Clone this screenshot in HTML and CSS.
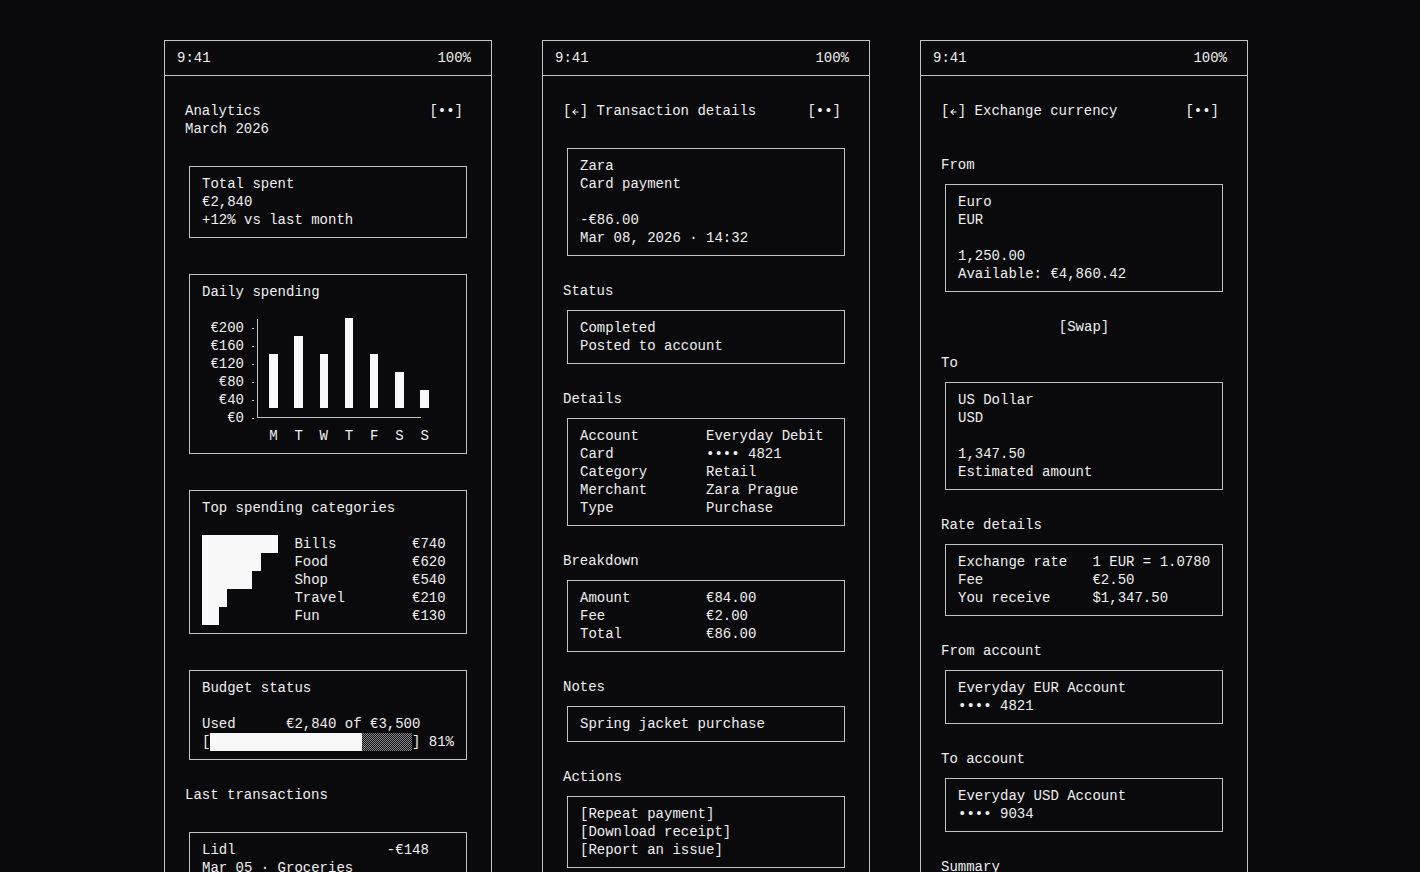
FILE: index.html
```html
<!DOCTYPE html>
<html lang="en">
<head>
<meta charset="utf-8">
<title>Wallet screens</title>
<link rel="stylesheet" href="styles.css">
</head>
<body>
<main class="screens">

  <!-- Analytics -->
  <section class="phone">
    <div class="status"><span>9:41</span><span>100%</span></div>
    <div class="screen">
      <header class="topbar">
        <div>Analytics<br>March 2026</div>
        <span>[••]</span>
      </header>

      <div class="card">
        <div>Total spent</div>
        <div>€2,840</div>
        <div>+12% vs last month</div>
      </div>

      <div class="card">
        <div>Daily spending</div>
        <div class="chart">
          <ul class="y-axis">
            <li>€200</li>
            <li>€160</li>
            <li>€120</li>
            <li>€80</li>
            <li>€40</li>
            <li>€0</li>
          </ul>
          <div class="plot">
            <span class="bar" style="height:54px"></span>
            <span class="bar" style="height:72px"></span>
            <span class="bar" style="height:54px"></span>
            <span class="bar" style="height:90px"></span>
            <span class="bar" style="height:54px"></span>
            <span class="bar" style="height:36px"></span>
            <span class="bar" style="height:18px"></span>
          </div>
          <div class="days">M  T  W  T  F  S  S</div>
        </div>
      </div>

      <div class="card">
        <div>Top spending categories</div>
        <div class="cats">
          <span class="block" style="width:9ch"></span><span>Bills</span><span>€740</span>
          <span class="block" style="width:7ch"></span><span>Food</span><span>€620</span>
          <span class="block" style="width:6ch"></span><span>Shop</span><span>€540</span>
          <span class="block" style="width:3ch"></span><span>Travel</span><span>€210</span>
          <span class="block" style="width:2ch"></span><span>Fun</span><span>€130</span>
        </div>
      </div>

      <div class="card">
        <div>Budget status</div>
        <div class="budget">
          <div class="kv kv-10"><span>Used</span><span>€2,840 of €3,500</span></div>
          <div class="progress">
            <span>[</span>
            <span class="meter"><span class="fill" style="width:75%"></span></span>
            <span>]&nbsp;81%</span>
          </div>
        </div>
      </div>

      <div class="label">Last transactions</div>

      <div class="card">
        <div class="kv kv-22"><span>Lidl</span><span>-€148</span></div>
        <div>Mar 05 · Groceries</div>
        <div class="blank"></div>
        <div class="kv kv-22"><span>Zara</span><span>-€86</span></div>
        <div>Mar 08 · Retail</div>
      </div>
    </div>
  </section>

  <!-- Transaction details -->
  <section class="phone">
    <div class="status"><span>9:41</span><span>100%</span></div>
    <div class="screen">
      <header class="topbar">
        <span>[<svg class="back" viewBox="0 0 8.4 18" aria-label="back"><path d="M2 10h5M2 10l2.2-2.2M2 10l2.2 2.2"/></svg>] Transaction details</span>
        <span>[••]</span>
      </header>

      <div class="card">
        <div>Zara</div>
        <div>Card payment</div>
        <div class="blank"></div>
        <div>-€86.00</div>
        <div>Mar 08, 2026 · 14:32</div>
      </div>

      <div class="section">
        <div class="label">Status</div>
        <div class="card">
          <div>Completed</div>
          <div>Posted to account</div>
        </div>
      </div>

      <div class="section">
        <div class="label">Details</div>
        <div class="card kv kv-15">
          <span>Account</span><span>Everyday Debit</span>
          <span>Card</span><span>•••• 4821</span>
          <span>Category</span><span>Retail</span>
          <span>Merchant</span><span>Zara Prague</span>
          <span>Type</span><span>Purchase</span>
        </div>
      </div>

      <div class="section">
        <div class="label">Breakdown</div>
        <div class="card kv kv-15">
          <span>Amount</span><span>€84.00</span>
          <span>Fee</span><span>€2.00</span>
          <span>Total</span><span>€86.00</span>
        </div>
      </div>

      <div class="section">
        <div class="label">Notes</div>
        <div class="card">
          <div>Spring jacket purchase</div>
        </div>
      </div>

      <div class="section">
        <div class="label">Actions</div>
        <div class="card">
          <div>[Repeat payment]</div>
          <div>[Download receipt]</div>
          <div>[Report an issue]</div>
        </div>
      </div>
    </div>
  </section>

  <!-- Exchange currency -->
  <section class="phone">
    <div class="status"><span>9:41</span><span>100%</span></div>
    <div class="screen">
      <header class="topbar">
        <span>[<svg class="back" viewBox="0 0 8.4 18" aria-label="back"><path d="M2 10h5M2 10l2.2-2.2M2 10l2.2 2.2"/></svg>] Exchange currency</span>
        <span>[••]</span>
      </header>

      <div class="section">
        <div class="label">From</div>
        <div class="card">
          <div>Euro</div>
          <div>EUR</div>
          <div class="blank"></div>
          <div>1,250.00</div>
          <div>Available: €4,860.42</div>
        </div>
      </div>

      <div class="swap">[Swap]</div>

      <div class="section">
        <div class="label">To</div>
        <div class="card">
          <div>US Dollar</div>
          <div>USD</div>
          <div class="blank"></div>
          <div>1,347.50</div>
          <div>Estimated amount</div>
        </div>
      </div>

      <div class="section">
        <div class="label">Rate details</div>
        <div class="card kv kv-16">
          <span>Exchange rate</span><span>1 EUR = 1.0780</span>
          <span>Fee</span><span>€2.50</span>
          <span>You receive</span><span>$1,347.50</span>
        </div>
      </div>

      <div class="section">
        <div class="label">From account</div>
        <div class="card">
          <div>Everyday EUR Account</div>
          <div>•••• 4821</div>
        </div>
      </div>

      <div class="section">
        <div class="label">To account</div>
        <div class="card">
          <div>Everyday USD Account</div>
          <div>•••• 9034</div>
        </div>
      </div>

      <div class="section">
        <div class="label">Summary</div>
        <div class="card">
          <div>You pay €1,252.50</div>
        </div>
      </div>
    </div>
  </section>

</main>
</body>
</html>
```

FILE: styles.css
```css
:root {
  --bg: #0a0a0c;
  --ink: #efefef;
  --line: #c2c2c2;
  --solid: #f8f8f8;
}

* {
  box-sizing: border-box;
}

html,
body {
  margin: 0;
  background: var(--bg);
}

body {
  color: var(--ink);
  font-family: "Liberation Mono", "DejaVu Sans Mono", monospace;
  font-size: 14px;
  line-height: 18px;
}

.screens {
  height: 100vh;
  overflow: hidden;
  display: flex;
  justify-content: center;
  align-items: flex-start;
  gap: 50px;
  padding: 40px 8px 0 0;
}

/* phone frame */
.phone {
  width: 328px;
  height: 900px;
  flex: none;
  border: 1px solid var(--line);
  display: flex;
  flex-direction: column;
  overflow: hidden;
}

.status {
  display: flex;
  justify-content: space-between;
  padding: 8px 20px 8px 12px;
  border-bottom: 1px solid var(--line);
}

.screen {
  display: flex;
  flex-direction: column;
  gap: 26px;
  padding: 26px 20px 0;
}

.topbar {
  display: flex;
  justify-content: space-between;
  align-items: flex-start;
  padding-right: 8px;
}

.back {
  display: inline-block;
  width: 1ch;
  height: 18px;
  vertical-align: top;
  fill: none;
  stroke: var(--ink);
  stroke-width: 1.1;
  stroke-linecap: square;
}

/* boxed panels */
.card {
  border: 1px solid var(--line);
  padding: 8px 12px;
  margin: 2px 4px 0;
}

.card + .card {
  margin-top: 10px;
}

.section {
  display: flex;
  flex-direction: column;
  gap: 8px;
}

.topbar + .section {
  margin-top: 10px;
}

.swap {
  text-align: center;
}

.swap + .section {
  margin-top: -8px;
}

.blank {
  height: 18px;
}

/* key / value rows aligned on character columns */
.kv {
  display: grid;
  white-space: nowrap;
}

.kv-10 { grid-template-columns: 10ch 1fr; }
.kv-15 { grid-template-columns: 15ch 1fr; }
.kv-16 { grid-template-columns: 16ch 1fr; }
.kv-22 { grid-template-columns: 22ch 1fr; }

/* daily spending chart */
.chart {
  display: grid;
  grid-template-columns: 5ch 1fr;
  grid-template-rows: 108px 18px;
  margin-top: 18px;
}

.y-axis {
  list-style: none;
  margin: 0;
  padding: 0;
  text-align: right;
}

.y-axis li {
  position: relative;
}

.y-axis li::after {
  content: "";
  position: absolute;
  left: calc(100% + 8px);
  top: 9px;
  width: 2px;
  height: 1px;
  background: var(--line);
}

.plot {
  display: flex;
  align-items: flex-end;
  gap: 2ch;
  width: 164px;
  height: 99px;
  margin: 0 0 0 13px;
  padding: 0 0 9px 11.2px;
  border-left: 1px solid var(--line);
  border-bottom: 1px solid var(--line);
}

.bar {
  flex: none;
  width: 1ch;
  background: var(--solid);
}

.days {
  grid-column: 2;
  white-space: pre;
  padding-left: 3ch;
}

/* category stair */
.cats {
  display: grid;
  grid-template-columns: 11ch 14ch auto;
  margin-top: 18px;
}

.block {
  height: 18px;
  background: var(--solid);
}

/* budget meter */
.budget {
  margin-top: 18px;
}

.progress {
  display: flex;
  white-space: pre;
}

.meter {
  display: block;
  width: 24ch;
  height: 18px;
  background: repeating-conic-gradient(#8e8e8e 0 25%, var(--bg) 0 50%) 0 0 / 2px 2px;
}

.fill {
  display: block;
  height: 100%;
  background: var(--solid);
}
```
